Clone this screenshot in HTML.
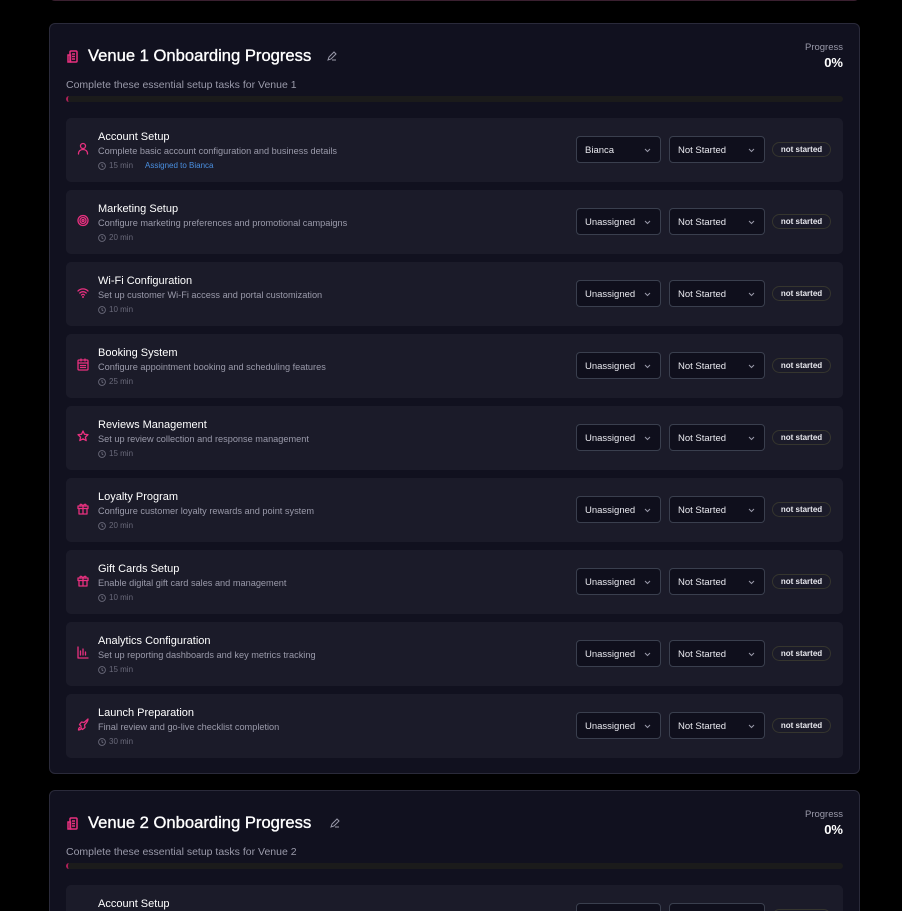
<!DOCTYPE html>
<html><head><meta charset="utf-8"><style>
*{box-sizing:border-box;margin:0;padding:0}
html,body{width:902px;height:911px;overflow:hidden}
body{background:#000;font-family:"Liberation Sans",sans-serif;position:relative;color:#fff}
.top{position:absolute;left:49px;top:-20px;width:811px;height:21px;border:1px solid #3a2030;border-radius:6px;background:#0a0a12}
.card{position:absolute;left:49px;width:811px;background:#11111f;border:1px solid #2a2a3a;border-radius:6px;overflow:hidden}
.hicon{position:absolute;left:17px;top:26px}
.title{position:absolute;left:38px;top:22px;font-size:16.6px;font-weight:normal;letter-spacing:0px;-webkit-text-stroke:0.35px #fff}
.edit{position:absolute;top:27px}
.sub{position:absolute;left:16px;top:55px;font-size:10.5px;color:#9a9aaa}
.plab{position:absolute;right:16px;top:18px;font-size:9.5px;color:#9a9aaa;text-align:right}
.pval{position:absolute;right:16px;top:31px;font-size:13px;font-weight:bold}
.bar{position:absolute;left:16px;top:72px;width:777px;height:6px;background:#1b1b1b;border-radius:3px;border-left:2px solid #b0205a}
.row{position:absolute;left:16px;width:777px;height:64px;background:#1b1b29;border-radius:5px}
.ic{position:absolute;left:11px;top:24px}
.rt{position:absolute;left:32px;top:13px;font-size:11px;color:#fff}
.rd{position:absolute;left:32px;top:28px;font-size:9.2px;color:#9a9aaa}
.rm{position:absolute;left:32px;top:43px;font-size:8px;color:#6a6a7a;display:flex;align-items:center;gap:3px}
.rm .as{color:#4a8fe0;margin-left:9px}
.sel{position:absolute;top:18px;height:27px;border:1px solid #3a3f4e;border-radius:4px;background:#0f0f1c;font-size:9.5px;color:#e8e8ee;padding:8px 0 0 8px}
.sel svg{position:absolute;right:9px;top:11px}
.s1{left:510px;width:85px}.s2{left:603px;width:96px}
.badge{position:absolute;left:706px;top:24px;width:59px;height:15px;border:1px solid #35352e;border-radius:8px;font-size:8px;font-weight:bold;color:#e8e8ee;text-align:center;line-height:13px}
</style></head><body>
<div class="top"></div>

<div class="card" style="top:23px;height:751px">
<svg class="hicon" width="12" height="13" viewBox="0 0 12 13" fill="none" stroke="#e8307f" stroke-width="1.5"><rect x="3" y="1" width="7" height="11" rx="1"/><rect x="1" y="5" width="2.5" height="7"/><path d="M5 4h3M5 6.5h3M5 9h3"/></svg>
<div class="title">Venue 1 Onboarding Progress</div>
<svg class="edit" style="left:277px" width="10" height="10" viewBox="0 0 10 10" fill="none" stroke="#9a9aaa" stroke-width="1"><path d="M1 9l1-3 5-5 2 2-5 5z M5 9h4"/></svg>
<div class="sub">Complete these essential setup tasks for Venue 1</div>
<div class="plab">Progress</div><div class="pval">0%</div>
<div class="bar"></div>
<div id="rows"></div>
</div>

<div class="card" style="top:790px;height:130px">
<svg class="hicon" width="12" height="13" viewBox="0 0 12 13" fill="none" stroke="#e8307f" stroke-width="1.5"><rect x="3" y="1" width="7" height="11" rx="1"/><rect x="1" y="5" width="2.5" height="7"/><path d="M5 4h3M5 6.5h3M5 9h3"/></svg>
<div class="title">Venue 2 Onboarding Progress</div>
<svg class="edit" style="left:280px" width="10" height="10" viewBox="0 0 10 10" fill="none" stroke="#9a9aaa" stroke-width="1"><path d="M1 9l1-3 5-5 2 2-5 5z M5 9h4"/></svg>
<div class="sub">Complete these essential setup tasks for Venue 2</div>
<div class="plab">Progress</div><div class="pval">0%</div>
<div class="bar"></div>
<div class="row" style="top:94px"><div class="rt">Account Setup</div>
<div class="sel s1"></div><div class="sel s2"></div><div class="badge"></div></div>
</div>

<script>
var P='fill="none" stroke="#e8307f" stroke-width="1.3" stroke-linecap="round" stroke-linejoin="round"';
var icons={
user:'<circle cx="6" cy="4" r="2.5"/><path d="M1.5 12c0-3 2-4.5 4.5-4.5s4.5 1.5 4.5 4.5"/>',
target:'<circle cx="6" cy="6.5" r="5"/><circle cx="6" cy="6.5" r="3"/><circle cx="6" cy="6.5" r="1"/>',
wifi:'<path d="M1 5a7 7 0 0 1 10 0M2.8 7a4.5 4.5 0 0 1 6.4 0M4.5 9a2 2 0 0 1 3 0"/><circle cx="6" cy="11" r=".4"/>',
cal:'<rect x="1" y="2" width="10" height="10" rx="1"/><path d="M1 5h10M4 1v2M8 1v2M3.5 7.5h1M5.5 7.5h1M7.5 7.5h1M3.5 9.5h1M5.5 9.5h1M7.5 9.5h1"/>',
star:'<path d="M6 1l1.5 3.3 3.5.4-2.6 2.4.8 3.5L6 8.8 2.8 10.6l.8-3.5L1 4.7l3.5-.4z"/>',
gift:'<rect x="1" y="4" width="10" height="2.5"/><path d="M2 6.5V12h8V6.5M6 4v8M6 4C4 1 2 2.5 3.5 4M6 4c2-3 4-1.5 2.5 0"/>',
chart:'<path d="M1 1v11h10M3.5 9V5M6 9V3M8.5 9V6"/>',
rocket:'<path d="M2.5 9.5c-1 1-1 2.5-1 2.5s1.5 0 2.5-1M4 8l-1.5-1.5 2-2.5L7 4.5 11 1c0 0 0 2.5-3.5 6l.5 2.5L5.5 11.5 4 10z"/>'
};
var rows=[
['user','Account Setup','Complete basic account configuration and business details','15 min','Bianca'],
['target','Marketing Setup','Configure marketing preferences and promotional campaigns','20 min'],
['wifi','Wi-Fi Configuration','Set up customer Wi-Fi access and portal customization','10 min'],
['cal','Booking System','Configure appointment booking and scheduling features','25 min'],
['star','Reviews Management','Set up review collection and response management','15 min'],
['gift','Loyalty Program','Configure customer loyalty rewards and point system','20 min'],
['gift','Gift Cards Setup','Enable digital gift card sales and management','10 min'],
['chart','Analytics Configuration','Set up reporting dashboards and key metrics tracking','15 min'],
['rocket','Launch Preparation','Final review and go-live checklist completion','30 min']];
var chev='<svg width="7" height="5" viewBox="0 0 7 5" fill="none" stroke="#9a9aaa" stroke-width="1"><path d="M1 1l2.5 2.5L6 1"/></svg>';
var clock='<svg width="8" height="8" viewBox="0 0 8 8" fill="none" stroke="#6a6a7a" stroke-width=".9"><circle cx="4" cy="4" r="3.4"/><path d="M4 2v2l1.3 1"/></svg>';
var h='';
rows.forEach(function(r,i){
h+='<div class="row" style="top:'+(94+i*72)+'px"><svg class="ic" width="12" height="13" viewBox="0 0 12 13" '+P+'>'+icons[r[0]]+'</svg>'+
'<div class="rt">'+r[1]+'</div><div class="rd">'+r[2]+'</div><div class="rm">'+clock+r[3]+(r[4]?'<span class="as">Assigned to Bianca</span>':'')+'</div>'+
'<div class="sel s1">'+(r[4]||'Unassigned')+chev+'</div><div class="sel s2">Not Started'+chev+'</div><div class="badge">not started</div></div>';
});
document.getElementById('rows').innerHTML=h;
</script>
</body></html>
